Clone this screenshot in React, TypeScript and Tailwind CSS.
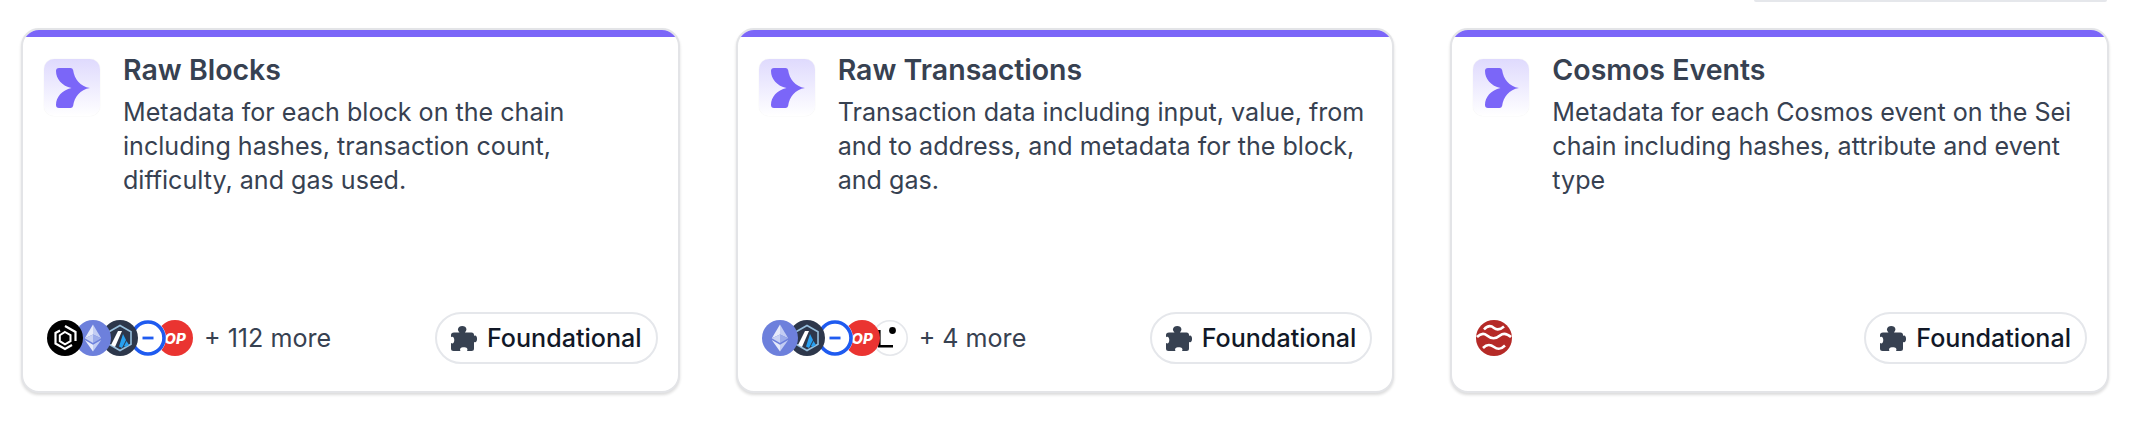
function BrandTile() {
  return (
    <div className="h-[57px] w-[56px] shrink-0 rounded-[10px] bg-gradient-to-b from-[#dfdafd] to-white shadow-[0_0_1px_rgba(0,0,0,0.12)]">
      <svg viewBox="0 0 56 57" className="h-full w-full">
        <path
          d="M15 9H26.5Q28.6 9 29.1 11C30.4 20 36 27.6 46 29C36 30.4 30.4 38 29.1 47Q28.6 49 26.5 49H15Q12 49 12 46C12 38 18 31 27.5 29C18 27 12 20 12 12Q12 9 15 9Z"
          fill="#7b66f8"
        />
      </svg>
    </div>
  );
}

function PuzzleIcon() {
  return (
    <svg viewBox="0 0 26 25" className="h-[25px] w-[26px] shrink-0" fill="#374151">
      <path d="M3 6.5H8.5C7 5 6.8 3.8 7 3C7.4 1 9 0 11.2 0C13.5 0 15.2 1.2 15.4 3C15.5 4 15 5.2 14 6.5H20.5Q23 6.5 23 9V10C24 9.3 25 9.5 25.5 10.5C26.2 11.8 26.2 14 25.5 15.3C25 16.4 24 16.6 23 15.9V22.5Q23 25 20.5 25H16C16.6 24 16.6 23 16 22.2C15 20.8 10.5 20.8 9.5 22.2C8.9 23 8.9 24 9.5 25H2.5Q0 25 0 22.5V17C1 17.7 2 17.6 2.6 16.8C3.5 15.5 3.5 12.7 2.6 11.4C2 10.6 1 10.5 0 11.2V9Q0 6.5 3 6.5Z" />
    </svg>
  );
}

function BlackLogo() {
  return (
    <svg viewBox="0 0 36 36" className="h-full w-full">
      <circle cx="18" cy="18" r="18" fill="#000" />
      <path d="M18 6L28.5 12V21" fill="none" stroke="#fff" strokeWidth="2.2" />
      <path d="M25 25L18 29L8.5 23.5V13L13 10.5" fill="none" stroke="#fff" strokeWidth="2.2" />
      <path d="M18 12L23.5 15.2V21.2L18 24.4L12.8 21.2V15.2Z" fill="none" stroke="#fff" strokeWidth="2" />
    </svg>
  );
}

function EthLogo() {
  return (
    <svg viewBox="0 0 36 36" className="h-full w-full">
      <circle cx="18" cy="18" r="18" fill="#6d80dc" />
      <polygon points="18,4.5 18,14.5 9.8,18.2" fill="#e6eafa" />
      <polygon points="18,4.5 26.2,18.2 18,14.5" fill="#c3cdf3" />
      <polygon points="18,14.5 9.8,18.2 18,23" fill="#c9d2f4" />
      <polygon points="18,14.5 26.2,18.2 18,23" fill="#9cacea" />
      <polygon points="9.8,20 18,24.8 18,31.5" fill="#e6eafa" />
      <polygon points="26.2,20 18,24.8 18,31.5" fill="#c3cdf3" />
    </svg>
  );
}

function ArbLogo() {
  return (
    <svg viewBox="0 0 36 36" className="h-full w-full">
      <circle cx="18" cy="18" r="18" fill="#2d374b" />
      <polygon points="18,5.5 29,11.8 29,24.2 18,30.5 7,24.2 7,11.8" fill="#2d374b" stroke="#96bedc" strokeWidth="1.6" />
      <polygon points="16,11 20,11 13,27 9,25" fill="#fff" />
      <polygon points="21,14 24,20 20,28 17,26.5" fill="#28a0f0" />
      <polygon points="24.5,21 27,25 23.5,27 22,26" fill="#28a0f0" />
    </svg>
  );
}

function RingLogo() {
  return (
    <svg viewBox="0 0 36 36" className="h-full w-full">
      <circle cx="18" cy="18" r="18" fill="#fff" />
      <circle cx="18" cy="18" r="16" fill="none" stroke="#1f5bf0" strokeWidth="3.6" />
      <rect x="12.5" y="16.6" width="11" height="2.8" fill="#1f5bf0" />
    </svg>
  );
}

function OpLogo() {
  return (
    <svg viewBox="0 0 36 36" className="h-full w-full">
      <circle cx="18" cy="18" r="18" fill="#ea3431" />
      <text
        x="18"
        y="23.5"
        textAnchor="middle"
        fontFamily="Inter, sans-serif"
        fontSize="15"
        fontWeight="800"
        fontStyle="italic"
        fill="#fff"
      >
        OP
      </text>
    </svg>
  );
}

function LineaLogo() {
  return (
    <svg viewBox="0 0 36 36" className="h-full w-full">
      <circle cx="18" cy="18" r="17.2" fill="#fff" stroke="#e5e7eb" strokeWidth="1.6" />
      <path d="M6 10H8.6V25H21V27.4H6Z" fill="#000" />
      <circle cx="20.5" cy="10.5" r="3.4" fill="#000" />
    </svg>
  );
}

function SeiLogo() {
  return (
    <svg viewBox="0 0 36 36" className="h-full w-full">
      <circle cx="18" cy="18" r="18" fill="#b52a27" />
      <path d="M8 9.5C12 5 15 5.5 18 8C21 10.5 24 10 28 6.5" fill="none" stroke="#fff" strokeWidth="2.6" />
      <path d="M1 17C5 13 8 13 11 15.5C15 19 20 19 24 15.5C27 13 31 13.5 35 17" fill="none" stroke="#fff" strokeWidth="2.6" />
      <path d="M7 28C11 24 14 24 18 27C22 30 25 29.5 29 25.5" fill="none" stroke="#fff" strokeWidth="2.6" />
    </svg>
  );
}

function LogoStack({ logos }: { logos: React.ReactNode[] }) {
  const layers = ["z-50", "z-40", "z-30", "z-20", "z-10"];
  return (
    <div className="flex">
      {logos.map((logo, i) => (
        <div key={i} className={`relative h-9 w-9 ${layers[i]} ${i > 0 ? "-ml-[8.5px]" : ""}`}>
          {logo}
        </div>
      ))}
    </div>
  );
}

function DatasetCard({
  title,
  description,
  logos,
  more,
}: {
  title: string;
  description: string;
  logos: React.ReactNode[];
  more?: string;
}) {
  return (
    <div className="flex h-[365px] flex-col overflow-hidden rounded-[18px] border-2 border-[#e3e4e7] bg-white shadow-[0_2px_3px_rgba(0,0,0,0.14)]">
      <div className="h-[7px] shrink-0 bg-[#7b66f8]" />
      <div className="flex flex-1 gap-[23px] pl-[21px] pr-[20px] pt-[22px]">
        <BrandTile />
        <div className="-mt-[9px] min-w-0 flex-1">
          <h3 className="text-[28.5px] leading-[40px] font-semibold text-[#374151]">{title}</h3>
          <p className="mt-[5px] text-[25.1px] leading-[34px] text-[#374151]">{description}</p>
        </div>
      </div>
      <div className="flex items-center justify-between pb-[27px] pl-[24px] pr-[20px]">
        <div className="flex items-center gap-[11px]">
          <LogoStack logos={logos} />
          {more && <span className="text-[25.1px] leading-[32px] text-[#374151]">{more}</span>}
        </div>
        <div className="flex h-[52px] items-center gap-[10px] rounded-full border-2 border-[#e5e7eb] bg-white pl-[14px] pr-[14px]">
          <PuzzleIcon />
          <span className="text-[25.1px] leading-[32px] font-medium text-[#111827]">Foundational</span>
        </div>
      </div>
    </div>
  );
}

export default function App() {
  return (
    <div className="h-[426px] overflow-hidden bg-white pl-[21px] pr-[35px] font-['Inter',sans-serif]">
      {/* bottom edge of the panel above */}
      <div className="flex h-[28px] justify-end pr-[2px]">
        <div className="h-[2px] w-[353px] rounded-b-lg border-b-2 border-[#e5e7eb]" />
      </div>
      <div className="grid grid-cols-3 gap-x-[56px]">
        <DatasetCard
          title="Raw Blocks"
          description="Metadata for each block on the chain including hashes, transaction count, difficulty, and gas used."
          logos={[<BlackLogo />, <EthLogo />, <ArbLogo />, <RingLogo />, <OpLogo />]}
          more="+ 112 more"
        />
        <DatasetCard
          title="Raw Transactions"
          description="Transaction data including input, value, from and to address, and metadata for the block, and gas."
          logos={[<EthLogo />, <ArbLogo />, <RingLogo />, <OpLogo />, <LineaLogo />]}
          more="+ 4 more"
        />
        <DatasetCard
          title="Cosmos Events"
          description="Metadata for each Cosmos event on the Sei chain including hashes, attribute and event type"
          logos={[<SeiLogo />]}
        />
      </div>
    </div>
  );
}
